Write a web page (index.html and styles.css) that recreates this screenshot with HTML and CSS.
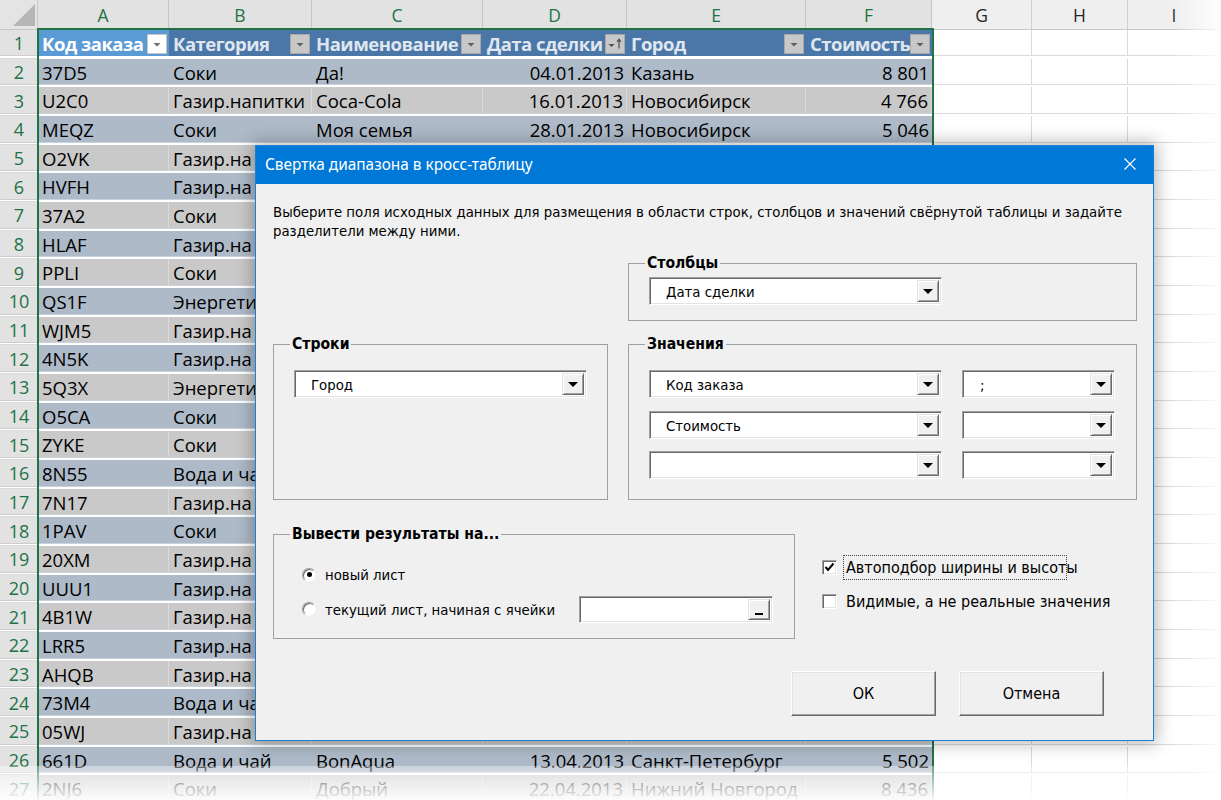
FILE: index.html
```html
<!DOCTYPE html>
<html lang="ru">
<head>
<meta charset="utf-8">
<title>Свертка диапазона в кросс-таблицу</title>
<link rel="stylesheet" href="styles.css">
</head>
<body>
<div class="sheet">
  <div class="r hdr">
    <div class="corner"><svg width="38" height="29" viewBox="0 0 38 29"><path d="M35 4V26H13Z" fill="#b5b5b5"/></svg></div>
    <div class="ch s">A</div><div class="ch s">B</div><div class="ch s">C</div><div class="ch s">D</div><div class="ch s">E</div><div class="ch s">F</div>
    <div class="ch">G</div><div class="ch">H</div><div class="ch">I</div><div class="ch last"></div>
  </div>
  <div class="r th">
    <div class="rn">1</div>
    <div class="c h act">Код заказа<i class="fb"><svg width="18" height="18" viewBox="0 0 18 18"><path d="M5.5 8h7l-3.5 3.5z" fill="#6b6b6b"/></svg></i></div>
    <div class="c h">Категория<i class="fb"><svg width="18" height="18" viewBox="0 0 18 18"><path d="M5.5 8h7l-3.5 3.5z" fill="#5f5f5f"/></svg></i></div>
    <div class="c h">Наименование<i class="fb"><svg width="18" height="18" viewBox="0 0 18 18"><path d="M5.5 8h7l-3.5 3.5z" fill="#5f5f5f"/></svg></i></div>
    <div class="c h">Дата сделки<i class="fb"><svg width="18" height="18" viewBox="0 0 18 18"><path d="M2.5 9h6l-3 3z" fill="#4f4f4f"/><path d="M13 4.5v9M11 6.8l2-2.5 2 2.5" stroke="#4f4f4f" stroke-width="1.2" fill="none"/></svg></i></div>
    <div class="c h">Город<i class="fb"><svg width="18" height="18" viewBox="0 0 18 18"><path d="M5.5 8h7l-3.5 3.5z" fill="#5f5f5f"/></svg></i></div>
    <div class="c h">Стоимость<i class="fb"><svg width="18" height="18" viewBox="0 0 18 18"><path d="M5.5 8h7l-3.5 3.5z" fill="#5f5f5f"/></svg></i></div>
    <div class="c e"></div><div class="c e"></div><div class="c e"></div><div class="c e"></div>
  </div>
  <div class="r b"><div class="rn">2</div><div class="c">37D5</div><div class="c">Соки</div><div class="c">Да!</div><div class="c n">04.01.2013</div><div class="c">Казань</div><div class="c n">8 801</div><div class="c e"></div><div class="c e"></div><div class="c e"></div><div class="c e"></div></div>
  <div class="r g"><div class="rn">3</div><div class="c">U2C0</div><div class="c">Газир.напитки</div><div class="c">Coca-Cola</div><div class="c n">16.01.2013</div><div class="c">Новосибирск</div><div class="c n">4 766</div><div class="c e"></div><div class="c e"></div><div class="c e"></div><div class="c e"></div></div>
  <div class="r b"><div class="rn">4</div><div class="c">MEQZ</div><div class="c">Соки</div><div class="c">Моя семья</div><div class="c n">28.01.2013</div><div class="c">Новосибирск</div><div class="c n">5 046</div><div class="c e"></div><div class="c e"></div><div class="c e"></div><div class="c e"></div></div>
  <div class="r g"><div class="rn">5</div><div class="c">O2VK</div><div class="c">Газир.на</div><div class="c"></div><div class="c"></div><div class="c"></div><div class="c"></div><div class="c e"></div><div class="c e"></div><div class="c e"></div><div class="c e"></div></div>
  <div class="r b"><div class="rn">6</div><div class="c">HVFH</div><div class="c">Газир.на</div><div class="c"></div><div class="c"></div><div class="c"></div><div class="c"></div><div class="c e"></div><div class="c e"></div><div class="c e"></div><div class="c e"></div></div>
  <div class="r g"><div class="rn">7</div><div class="c">37A2</div><div class="c">Соки</div><div class="c"></div><div class="c"></div><div class="c"></div><div class="c"></div><div class="c e"></div><div class="c e"></div><div class="c e"></div><div class="c e"></div></div>
  <div class="r b"><div class="rn">8</div><div class="c">HLAF</div><div class="c">Газир.на</div><div class="c"></div><div class="c"></div><div class="c"></div><div class="c"></div><div class="c e"></div><div class="c e"></div><div class="c e"></div><div class="c e"></div></div>
  <div class="r g"><div class="rn">9</div><div class="c">PPLI</div><div class="c">Соки</div><div class="c"></div><div class="c"></div><div class="c"></div><div class="c"></div><div class="c e"></div><div class="c e"></div><div class="c e"></div><div class="c e"></div></div>
  <div class="r b"><div class="rn">10</div><div class="c">QS1F</div><div class="c">Энергети</div><div class="c"></div><div class="c"></div><div class="c"></div><div class="c"></div><div class="c e"></div><div class="c e"></div><div class="c e"></div><div class="c e"></div></div>
  <div class="r g"><div class="rn">11</div><div class="c">WJM5</div><div class="c">Газир.на</div><div class="c"></div><div class="c"></div><div class="c"></div><div class="c"></div><div class="c e"></div><div class="c e"></div><div class="c e"></div><div class="c e"></div></div>
  <div class="r b"><div class="rn">12</div><div class="c">4N5K</div><div class="c">Газир.на</div><div class="c"></div><div class="c"></div><div class="c"></div><div class="c"></div><div class="c e"></div><div class="c e"></div><div class="c e"></div><div class="c e"></div></div>
  <div class="r g"><div class="rn">13</div><div class="c">5Q3X</div><div class="c">Энергети</div><div class="c"></div><div class="c"></div><div class="c"></div><div class="c"></div><div class="c e"></div><div class="c e"></div><div class="c e"></div><div class="c e"></div></div>
  <div class="r b"><div class="rn">14</div><div class="c">O5CA</div><div class="c">Соки</div><div class="c"></div><div class="c"></div><div class="c"></div><div class="c"></div><div class="c e"></div><div class="c e"></div><div class="c e"></div><div class="c e"></div></div>
  <div class="r g"><div class="rn">15</div><div class="c">ZYKE</div><div class="c">Соки</div><div class="c"></div><div class="c"></div><div class="c"></div><div class="c"></div><div class="c e"></div><div class="c e"></div><div class="c e"></div><div class="c e"></div></div>
  <div class="r b"><div class="rn">16</div><div class="c">8N55</div><div class="c">Вода и ча</div><div class="c"></div><div class="c"></div><div class="c"></div><div class="c"></div><div class="c e"></div><div class="c e"></div><div class="c e"></div><div class="c e"></div></div>
  <div class="r g"><div class="rn">17</div><div class="c">7N17</div><div class="c">Газир.на</div><div class="c"></div><div class="c"></div><div class="c"></div><div class="c"></div><div class="c e"></div><div class="c e"></div><div class="c e"></div><div class="c e"></div></div>
  <div class="r b"><div class="rn">18</div><div class="c">1PAV</div><div class="c">Соки</div><div class="c"></div><div class="c"></div><div class="c"></div><div class="c"></div><div class="c e"></div><div class="c e"></div><div class="c e"></div><div class="c e"></div></div>
  <div class="r g"><div class="rn">19</div><div class="c">20XM</div><div class="c">Газир.на</div><div class="c"></div><div class="c"></div><div class="c"></div><div class="c"></div><div class="c e"></div><div class="c e"></div><div class="c e"></div><div class="c e"></div></div>
  <div class="r b"><div class="rn">20</div><div class="c">UUU1</div><div class="c">Газир.на</div><div class="c"></div><div class="c"></div><div class="c"></div><div class="c"></div><div class="c e"></div><div class="c e"></div><div class="c e"></div><div class="c e"></div></div>
  <div class="r g"><div class="rn">21</div><div class="c">4B1W</div><div class="c">Газир.на</div><div class="c"></div><div class="c"></div><div class="c"></div><div class="c"></div><div class="c e"></div><div class="c e"></div><div class="c e"></div><div class="c e"></div></div>
  <div class="r b"><div class="rn">22</div><div class="c">LRR5</div><div class="c">Газир.на</div><div class="c"></div><div class="c"></div><div class="c"></div><div class="c"></div><div class="c e"></div><div class="c e"></div><div class="c e"></div><div class="c e"></div></div>
  <div class="r g"><div class="rn">23</div><div class="c">AHQB</div><div class="c">Газир.на</div><div class="c"></div><div class="c"></div><div class="c"></div><div class="c"></div><div class="c e"></div><div class="c e"></div><div class="c e"></div><div class="c e"></div></div>
  <div class="r b"><div class="rn">24</div><div class="c">73M4</div><div class="c">Вода и ча</div><div class="c"></div><div class="c"></div><div class="c"></div><div class="c"></div><div class="c e"></div><div class="c e"></div><div class="c e"></div><div class="c e"></div></div>
  <div class="r g"><div class="rn">25</div><div class="c">05WJ</div><div class="c">Газир.на</div><div class="c"></div><div class="c"></div><div class="c"></div><div class="c"></div><div class="c e"></div><div class="c e"></div><div class="c e"></div><div class="c e"></div></div>
  <div class="r b"><div class="rn">26</div><div class="c">661D</div><div class="c">Вода и чай</div><div class="c">BonAqua</div><div class="c n">13.04.2013</div><div class="c">Санкт-Петербург</div><div class="c n">5 502</div><div class="c e"></div><div class="c e"></div><div class="c e"></div><div class="c e"></div></div>
  <div class="r g"><div class="rn">27</div><div class="c">2NJ6</div><div class="c">Соки</div><div class="c">Добрый</div><div class="c n">22.04.2013</div><div class="c">Нижний Новгород</div><div class="c n">8 436</div><div class="c e"></div><div class="c e"></div><div class="c e"></div><div class="c e"></div></div>
</div>

<div class="sel"></div>
<div class="fade-b"></div>
<div class="fade-r"></div>

<div class="dlg">
  <div class="dlg-title">
    <span>Свертка диапазона в кросс-таблицу</span>
    <svg class="x" width="14" height="14" viewBox="0 0 14 14"><path d="M1.5 1.5l11 11M12.5 1.5l-11 11" stroke="#fff" stroke-width="1.2"/></svg>
  </div>
  <div class="dlg-body">
    <p class="desc">Выберите поля исходных данных для размещения в области строк, столбцов и значений свёрнутой таблицы и задайте<br>разделители между ними.</p>
    <div class="fields">
      <fieldset class="grp g-cols">
        <legend>Столбцы</legend>
        <div class="combo wide"><span class="val">Дата сделки</span><i class="dd"></i></div>
      </fieldset>
      <fieldset class="grp g-rows">
        <legend>Строки</legend>
        <div class="combo wide"><span class="val">Город</span><i class="dd"></i></div>
      </fieldset>
      <fieldset class="grp g-vals">
        <legend>Значения</legend>
        <div class="vals">
          <div class="combo wide"><span class="val">Код заказа</span><i class="dd"></i></div>
          <div class="combo narrow"><span class="val sep">;</span><i class="dd"></i></div>
          <div class="combo wide"><span class="val">Стоимость</span><i class="dd"></i></div>
          <div class="combo narrow"><span class="val"></span><i class="dd"></i></div>
          <div class="combo wide"><span class="val"></span><i class="dd"></i></div>
          <div class="combo narrow"><span class="val"></span><i class="dd"></i></div>
        </div>
      </fieldset>
    </div>
    <div class="lower">
      <fieldset class="grp g-out">
        <legend>Вывести результаты на...</legend>
        <div class="opt"><span class="radio on"></span><span>новый лист</span></div>
        <div class="opt"><span class="radio"></span><span class="lbl2">текущий лист, начиная с ячейки</span>
          <div class="ref"><i class="refbtn"></i></div>
        </div>
      </fieldset>
      <div class="checks">
        <div class="chk"><span class="box"><svg width="11" height="11" viewBox="0 0 11 11"><path d="M1.5 5l2.5 3 5.5-6.5" stroke="#000" stroke-width="2" fill="none"/></svg></span><span class="focus">Автоподбор ширины и высоты</span></div>
        <div class="chk"><span class="box"></span><span class="plain">Видимые, а не реальные значения</span></div>
      </div>
    </div>
    <div class="buttons">
      <div class="btn">ОК</div>
      <div class="btn">Отмена</div>
    </div>
  </div>
</div>
</body>
</html>
```

FILE: styles.css
```css
* { box-sizing: border-box; }
html, body { margin: 0; padding: 0; }
body {
  width: 1221px;
  height: 800px;
  overflow: hidden;
  position: relative;
  background: #fff;
  font-family: "Open Sans", Lato, sans-serif;
}

/* ---------- spreadsheet ---------- */
.sheet { display: flex; flex-direction: column; }
.r {
  display: grid;
  grid-template-columns: 38px 131px 143px 171px 144px 179px 126px 100px 96px 1fr;
  height: 28.68px;
  flex: none;
}
.r.hdr { height: 30px; }
.corner { background: #e4e4e4; border-right: 1px solid #c8c8c8; border-bottom: 1px solid #c8c8c8; }
.corner svg { display: block; }
.ch {
  background: #efefef;
  color: #262626;
  font-size: 17.5px;
  display: flex; align-items: center; justify-content: center;
  border-right: 1px solid #d0d0d0;
  border-bottom: 1px solid #c8c8c8;
}
.ch.s { background: #e2e2e2; color: #217346; border-right-color: #c5c5c5; }
.rn {
  background: #e2e2e2;
  color: #217346;
  font-size: 18px;
  display: flex; align-items: center; justify-content: center;
  border-bottom: 1px solid #cdcdcd;
  padding-top: 1px;
}
.c {
  font-size: 18.5px;
  color: #000;
  display: flex; align-items: center;
  padding: 1px 4px 0 4px;
  white-space: nowrap;
  overflow: hidden;
  border-bottom: 1px solid #c9d3de;
}
.c.n { justify-content: flex-end; padding-right: 3px; }
.c.e { background: #fff; border-right: 1px solid #dadada; border-bottom: 1px solid #dadada; }
.r.b .c:not(.e) { background: #aebac8; }
.r.g .c:not(.e) { background: #c9c9c9; border-right: 1px solid #dadada; }
.r.th .c.h {
  background: #4a77a8;
  color: #dfe6ee;
  font-weight: bold;
  border-bottom: none;
  padding-right: 2px;
  letter-spacing: -0.5px;
}
.r.th .c.h.act { background: #5b9bd5; color: #fff; }
.fb {
  margin-left: auto;
  flex: none;
  width: 20px; height: 20px;
  background: #c8c8c8;
  border: 1px solid #a8a8a8;
  display: flex; align-items: center; justify-content: center;
}
.act .fb { background: #fff; border-color: #c6c6c6; }
.fb svg { display: block; }

.sel {
  position: absolute;
  left: 37px; top: 28px;
  width: 897px; height: 790px;
  border: 2px solid #217346;
  pointer-events: none;
}
.fade-b {
  position: absolute; left: 0; right: 0; bottom: 0; height: 34px;
  background: linear-gradient(to bottom, rgba(255,255,255,0.35), rgba(255,255,255,0.95));
}
.fade-r {
  position: absolute; top: 0; right: 0; bottom: 0; width: 50px;
  background: linear-gradient(to right, rgba(255,255,255,0), rgba(255,255,255,0.9));
}

/* ---------- dialog ---------- */
.dlg {
  position: absolute;
  left: 255px; top: 145px;
  width: 899px; height: 596px;
  border: 1px solid #1b7fd6;
  background: #f0f0f0;
  box-shadow: 0 0 16px 3px rgba(0,0,0,0.28);
  display: flex; flex-direction: column;
  font-family: "DejaVu Sans Condensed", "DejaVu Sans", sans-serif;
  font-stretch: condensed;
  font-size: 14.8px;
  color: #000;
}
.dlg-title {
  height: 38px;
  background: #0078d7;
  color: #fff;
  display: flex; align-items: center; justify-content: space-between;
  padding: 0 16px 2px 9px;
  font-family: "Noto Sans", "Open Sans", sans-serif;
  font-stretch: normal;
  font-size: 15.4px;
}
.x { display: block; }
.dlg-body { padding: 18px 16px 0 17px; flex: 1; }
.desc { margin: 0 0 15px 0; line-height: 19px; }

.fields {
  display: grid;
  grid-template-columns: 335px 509px;
  grid-template-areas: ". cols" "rows vals";
  column-gap: 20px;
  row-gap: 15px;
}
.grp {
  margin: 0;
  border: 1px solid #a0a0a0;
  min-width: 0;
}
.grp legend {
  font-weight: bold;
  font-size: 15.6px;
  line-height: 16px;
  padding: 0 2px;
  margin-left: -4px;
}
.g-cols { grid-area: cols; padding: 6px 20px 15px 20px; }
.g-rows { grid-area: rows; padding: 18px 20px 20px 20px; }
.g-vals { grid-area: vals; padding: 18px 20px 20px 20px; }
.vals {
  display: grid;
  grid-template-columns: 293px 153px;
  column-gap: 20px;
  row-gap: 12.5px;
}

.combo {
  height: 28px;
  background: #fff;
  border: 1px solid;
  border-color: #a0a0a0 #fff #fff #a0a0a0;
  box-shadow: inset 1px 1px 0 #696969, inset -1px -1px 0 #e3e3e3;
  display: flex; align-items: center;
  padding: 2px 2px 2px 16px;
}
.combo.wide { width: 293px; }
.combo.narrow { width: 153px; }
.combo .val { flex: 1; white-space: nowrap; padding-top: 1px; }
.combo .val.sep { padding-left: 1px; }
.dd {
  flex: none;
  width: 22px; height: 100%;
  background: #f0f0f0;
  border: 1px solid;
  border-color: #e3e3e3 #696969 #696969 #e3e3e3;
  box-shadow: inset 1px 1px 0 #fff, inset -1px -1px 0 #a0a0a0;
  display: flex; align-items: center; justify-content: center;
}
.dd::after {
  content: "";
  border-left: 5px solid transparent;
  border-right: 5px solid transparent;
  border-top: 5px solid #000;
  margin-top: 1px;
}

.lower { display: flex; align-items: flex-start; gap: 27px; margin-top: 26px; }
.g-out { width: 522px; padding: 19px 20px 15px 28px; }
.g-out legend { margin-left: -12px; }
.opt { display: flex; align-items: center; height: 27px; }
.opt + .opt { margin-top: 7.5px; }
.radio {
  flex: none;
  width: 14px; height: 14px;
  border-radius: 50%;
  background: #fff;
  border: 1px solid;
  border-color: #a0a0a0 #fff #fff #a0a0a0;
  box-shadow: inset 1px 1px 0 #696969, 0 0 0 0.5px #e3e3e3;
  margin-right: 9px;
  position: relative;
}
.radio.on::after {
  content: "";
  position: absolute;
  left: 3.5px; top: 3.5px;
  width: 5px; height: 5px;
  border-radius: 50%;
  background: #000;
}
.lbl2 { width: 254px; }
.ref {
  width: 194px; height: 27px;
  background: #fff;
  border: 1px solid;
  border-color: #a0a0a0 #fff #fff #a0a0a0;
  box-shadow: inset 1px 1px 0 #696969, inset -1px -1px 0 #e3e3e3;
  display: flex; justify-content: flex-end; align-items: center;
  padding: 2px 2px 2px 2px;
}
.refbtn {
  width: 22px; height: 21px;
  background: #f0f0f0;
  border: 1px solid;
  border-color: #e3e3e3 #696969 #696969 #e3e3e3;
  box-shadow: inset 1px 1px 0 #fff, inset -1px -1px 0 #a0a0a0;
  display: flex; justify-content: center; align-items: flex-end;
  padding-bottom: 4px;
}
.refbtn::after { content: ""; width: 8px; height: 2px; background: #000; }

.checks { display: flex; flex-direction: column; margin-top: 29px; gap: 9px; font-size: 16px; }
.chk { display: flex; align-items: center; height: 25px; }
.box {
  flex: none;
  width: 15px; height: 15px;
  background: #fff;
  border: 1px solid;
  border-color: #a0a0a0 #fff #fff #a0a0a0;
  box-shadow: inset 1px 1px 0 #696969, inset -1px -1px 0 #e3e3e3;
  display: flex; align-items: center; justify-content: center;
  margin-right: 6px;
}
.box svg { display: block; margin: -1px 0 0 0; }
.focus {
  border: 1px dotted #444;
  padding: 2px 1px 2px 2px;
  width: 224px;
  white-space: nowrap;
  overflow: visible;
}
.plain { padding: 2px 1px 2px 3px; }

.buttons { display: flex; justify-content: flex-end; gap: 23px; margin-top: 32px; margin-right: 33px; font-size: 16px; }
.btn {
  width: 145px; height: 45px;
  background: #f0f0f0;
  border: 1px solid;
  border-color: #fff #696969 #696969 #fff;
  box-shadow: inset -1px -1px 0 #a0a0a0, inset 1px 1px 0 #e3e3e3;
  display: flex; align-items: center; justify-content: center;
  padding-top: 1px;
}
```
